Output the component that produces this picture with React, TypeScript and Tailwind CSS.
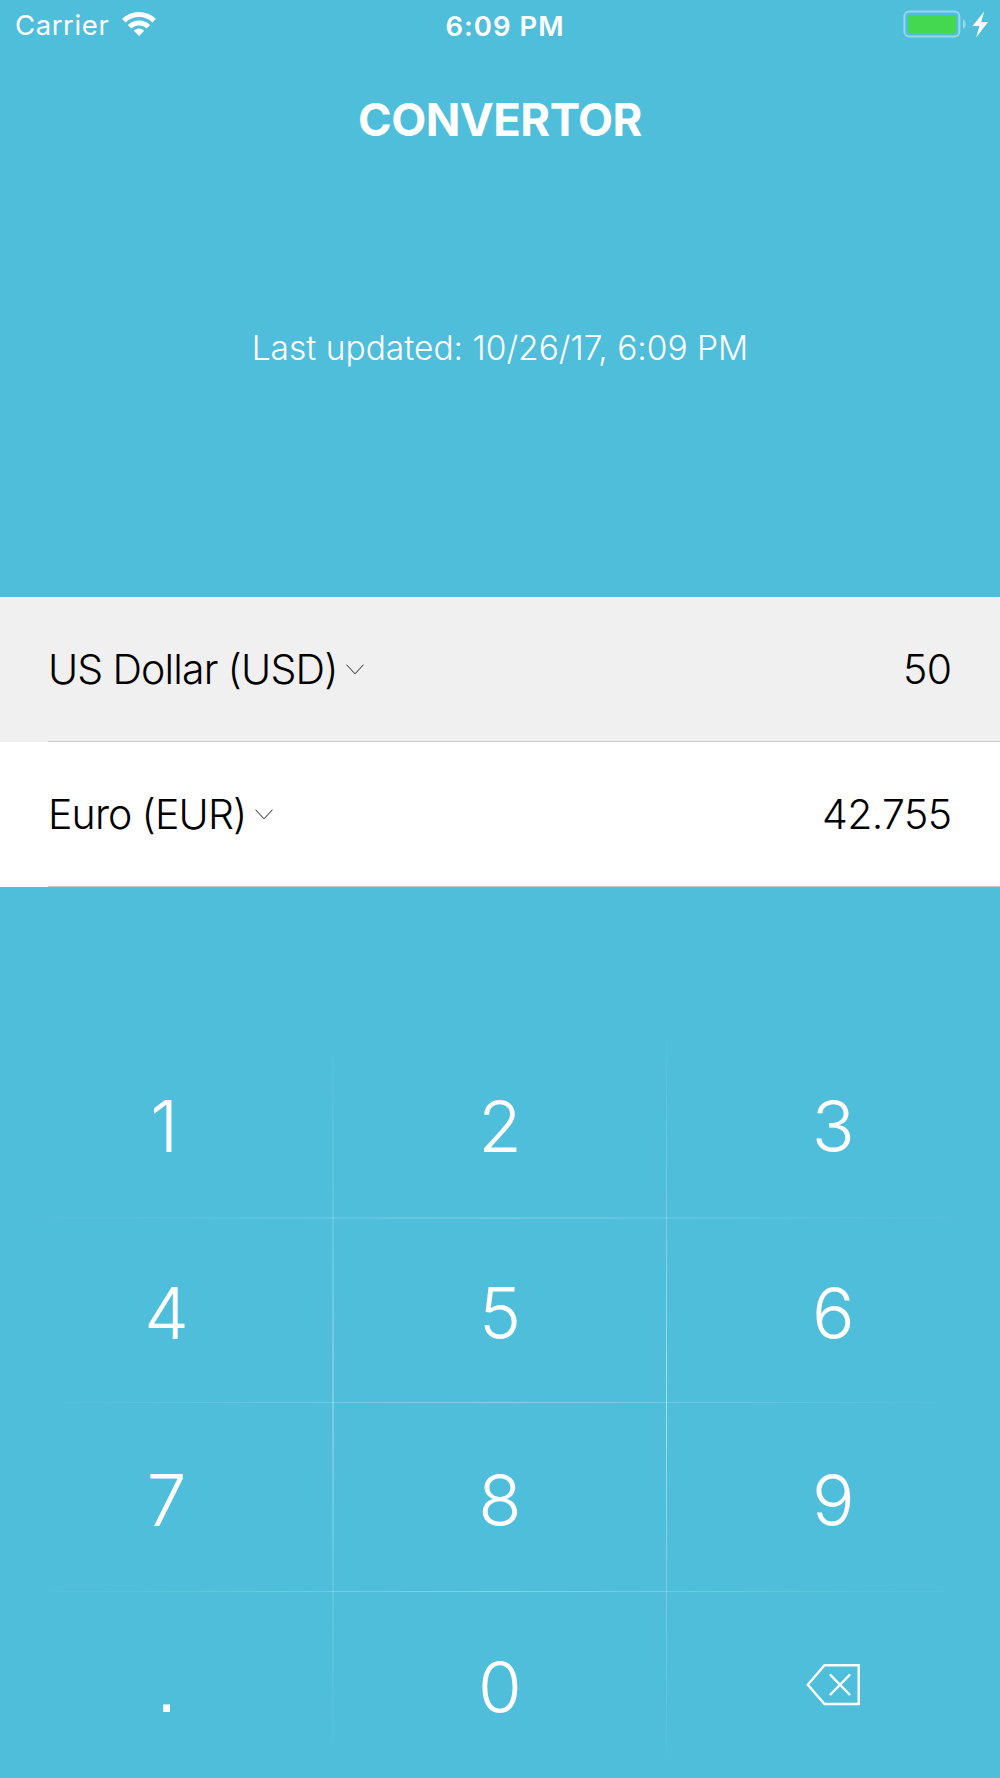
import React from "react";

const rows = [
  ["1", "2", "3"],
  ["4", "5", "6"],
  ["7", "8", "9"],
  [".", "0", "delete"],
];

function Chevron() {
  return (
    <svg width="18" height="11" viewBox="0 0 18 11" fill="none" className="-mt-[2px] ml-[8px]">
      <path d="M.5.7 9 9.8 17.5.7" stroke="#222" strokeWidth="1" />
    </svg>
  );
}

function WifiIcon() {
  return (
    <svg width="34" height="24" viewBox="0 0 34 24" fill="none" stroke="white" strokeWidth="5" className="-mt-[2px]">
      <path d="M1.8 8.8a21.6 21.6 0 0 1 30.4 0" />
      <path d="M7.6 14.8a13.3 13.3 0 0 1 18.8 0" />
      <path d="m17 24-5.2-5.2a7.3 7.3 0 0 1 10.4 0Z" fill="white" stroke="none" />
    </svg>
  );
}

function BatteryIcon() {
  return (
    <svg width="86" height="30" viewBox="0 0 86 30" fill="none" className="-mt-[2px]">
      <rect x="2.4" y="2.4" width="55" height="25" rx="5" stroke="white" strokeOpacity=".4" strokeWidth="2" />
      <rect x="6" y="6" width="48.2" height="18" rx="2.5" fill="#44d750" />
      <path d="M61 10.2c3.8 1.6 3.8 8 0 9.8Z" fill="white" fillOpacity=".4" />
      <path d="M82.2 2.5 70.6 17H77.4L74.2 28.6 86 13H79.2Z" fill="white" />
    </svg>
  );
}

function DeleteIcon() {
  return (
    <svg width="54" height="42" viewBox="0 0 54 42" fill="none" stroke="white" strokeWidth="2.4">
      <path d="M1.8 20.8 18.5 1.3H52.7V40H18.5Z" />
      <path d="m24.5 11 19 19.5M43.5 11l-19 19.5" strokeLinecap="round" />
    </svg>
  );
}

function Key({ label }: { label: string }) {
  if (label === "delete") {
    return (
      <div className="flex justify-center pt-[70px]">
        <DeleteIcon />
      </div>
    );
  }
  if (label === ".") {
    return <div className="text-center font-['Liberation_Sans',Arial,sans-serif]">.</div>;
  }
  return <div className={label === "1" ? "pr-[5px] text-center" : "text-center"}>{label}</div>;
}

function CurrencyRow({ name, value, active }: { name: string; value: string; active?: boolean }) {
  return (
    <div className={active ? "h-[145px] bg-[#f0f0f0]" : "h-[145px] bg-white"}>
      <div className="ml-12 flex h-full items-center justify-between border-b border-[#c8c8cc] pr-[48.5px] pt-[2px] text-[41px] font-light text-black">
        <div className="flex items-center">
          <span className="tracking-[-0.83px] [word-spacing:-0.7px]">{name}</span>
          <Chevron />
        </div>
        <span className="tracking-[-0.6px]">{value}</span>
      </div>
    </div>
  );
}

export default function App() {
  return (
    <div className="flex h-[1778px] w-[1000px] flex-col overflow-hidden bg-[#4fbedb] font-['Inter',sans-serif] text-white">
      <header className="grid h-[50px] shrink-0 grid-cols-3 items-center pl-[15px] pr-3">
        <div className="flex items-center gap-[13px] text-[27.5px] font-normal">
          <span className="mt-[2px] tracking-[0.6px]">Carrier</span>
          <WifiIcon />
        </div>
        <span className="ml-[7px] mt-[3px] text-center text-[27.5px] font-semibold tracking-[1px]">6:09 PM</span>
        <div className="flex justify-end">
          <BatteryIcon />
        </div>
      </header>
      <h1 className="mt-[40px] text-center text-[45.5px] font-bold leading-[60px] tracking-[-0.55px]">CONVERTOR</h1>
      <p className="mt-[168px] text-center text-[33.5px] font-light leading-[60px] tracking-[0.01px]">
        Last updated: 10/26/17, 6:09 PM
      </p>
      <main className="mt-[219px] shrink-0">
        <CurrencyRow name="US Dollar (USD)" value="50" active />
        <CurrencyRow name="Euro (EUR)" value="42.755" />
      </main>
      <div className="relative mt-[146px] shrink-0 text-[71px] font-light leading-[187px]">
        {rows.map((row) => (
          <div key={row[0]} className="grid h-[187px] grid-cols-3">
            {row.map((key) => (
              <Key key={key} label={key} />
            ))}
          </div>
        ))}
        <div className="absolute left-[332px] top-[7px] h-[715px] w-[2px] bg-linear-to-b from-white/0 via-white/25 to-white/0" />
        <div className="absolute left-[666px] top-[-3px] h-[740px] w-px bg-linear-to-b from-white/0 via-white/50 to-white/0" />
        <div className="absolute left-[20px] top-[184px] h-[2px] w-[960px] bg-linear-to-r from-white/0 via-white/15 to-white/0" />
        <div className="absolute left-[40px] top-[369px] h-px w-[920px] bg-linear-to-r from-white/0 via-white/30 to-white/0" />
        <div className="absolute left-[30px] top-[558px] h-px w-[940px] bg-linear-to-r from-white/0 via-white/30 to-white/0" />
      </div>
    </div>
  );
}
